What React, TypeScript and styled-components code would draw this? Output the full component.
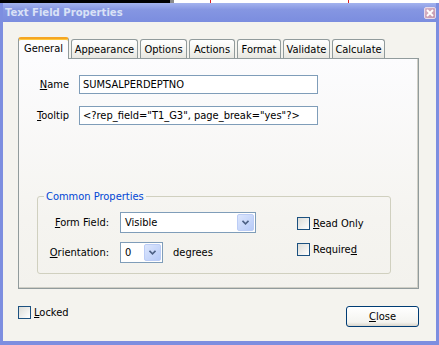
import styled, { createGlobalStyle } from 'styled-components';

const GlobalStyle = createGlobalStyle`
  html, body {
    margin: 0;
    padding: 0;
  }
  body {
    font-family: "DejaVu Sans Condensed", "DejaVu Sans", sans-serif;
    font-size: 11px;
    color: #000;
  }
`;

const Page = styled.div`
  width: 439px;
  height: 345px;
  display: flex;
  flex-direction: column;
  overflow: hidden;
`;

const TopStrip = styled.div`
  display: flex;
  height: 3px;
`;

const StripSeg = styled.div<{ $w?: number; $c: string }>`
  background: ${(p) => p.$c};
  ${(p) => (p.$w ? `width: ${p.$w}px;` : 'flex: 1;')}
`;

const Frame = styled.div`
  flex: 1;
  display: flex;
  flex-direction: column;
  background: #7d8ee0;
  padding: 0 3px 4px 3px;
`;

const TitleBar = styled.div`
  height: 19px;
  display: flex;
  align-items: center;
  justify-content: space-between;
  padding: 0 0 0 2px;
  background: linear-gradient(#a3b3ee 0%, #8596e2 35%, #7b8ddf 100%);
`;

const TitleText = styled.span`
  font-family: "DejaVu Sans Condensed", "DejaVu Sans", sans-serif;
  font-weight: bold;
  font-size: 11.2px;
  color: #d9e1f6;
`;

const CloseBox = styled.div`
  width: 12px;
  height: 12px;
  box-sizing: border-box;
  border: 1px solid #e6dcec;
  border-radius: 2px;
  background: linear-gradient(135deg, #d8b4c6, #c497ad);
  display: flex;
  align-items: center;
  justify-content: center;
`;

const Client = styled.div`
  flex: 1;
  display: flex;
  flex-direction: column;
  background: #f4f3ee;
  padding: 15px 17px 0 15px;
`;

const TabRow = styled.div`
  display: flex;
  align-items: flex-end;
  gap: 2px;
  height: 21px;
  position: relative;
  z-index: 1;
`;

const Tab = styled.div<{ $w: number; $active?: boolean }>`
  width: ${(p) => p.$w}px;
  box-sizing: border-box;
  display: flex;
  align-items: center;
  justify-content: center;
  border: 1px solid #919b9c;
  border-bottom: none;
  border-radius: 3px 3px 0 0;
  ${(p) =>
    p.$active
      ? `
    height: 22px;
    margin-bottom: -1px;
    border-top: 2px solid #f5a623;
    box-shadow: inset 0 1px 0 #ffc83c;
    background: #fcfcfe;
    padding-bottom: 2px;
  `
      : `
    height: 19px;
    background: linear-gradient(#ffffff, #f3f3ef 60%, #e7e6e0);
  `}
`;

const Panel = styled.div`
  height: 231px;
  box-sizing: border-box;
  border: 1px solid #919b9c;
  box-shadow: inset -1px -1px 0 #d0cfc6;
  background: linear-gradient(#fcfcfe, #f5f4f0 70%, #f3f2ed);
  padding: 16px 0 0 0;
  display: flex;
  flex-direction: column;
`;

const FieldGrid = styled.div`
  display: grid;
  grid-template-columns: 50px 239px;
  column-gap: 10px;
  row-gap: 12px;
  align-items: center;
`;

const FieldLabel = styled.span`
  text-align: right;
`;

const Key = styled.span`
  text-decoration: underline;
`;

const TextBox = styled.input`
  box-sizing: border-box;
  height: 19px;
  border: 1px solid #7f9db9;
  background: #fff;
  padding: 0 3px;
  font-family: inherit;
  font-size: 11px;
  color: #000;
  outline: none;
  margin: 0;
`;

const GroupBox = styled.fieldset`
  margin: 65px 0 0 18px;
  width: 354px;
  height: 84px;
  box-sizing: border-box;
  border: 1px solid #d0d0bf;
  border-radius: 3px;
  padding: 9px 0 0 0;
  min-width: 0;
  display: flex;
`;

const Legend = styled.legend`
  color: #0046d5;
  padding: 0 2px;
  margin-left: 6px;
`;

const GroupInner = styled.div`
  display: flex;
  align-items: flex-start;
`;

const OptionGrid = styled.div`
  display: grid;
  grid-template-columns: 71px auto;
  column-gap: 11px;
  row-gap: 9px;
  align-items: center;
`;

const InlineRow = styled.div`
  display: flex;
  align-items: center;
  gap: 10px;
`;

const Select = styled.div<{ $w: number }>`
  width: ${(p) => p.$w}px;
  height: 21px;
  box-sizing: border-box;
  border: 1px solid #7f9db9;
  background: #fff;
  display: flex;
  align-items: center;
  justify-content: space-between;
  padding: 1px 1px 1px 4px;
`;

const DropButton = styled.div`
  width: 17px;
  height: 100%;
  box-sizing: border-box;
  border: 1px solid #bccdf6;
  border-radius: 2px;
  background: linear-gradient(135deg, #dce6fd, #b7cbf8);
  display: flex;
  align-items: center;
  justify-content: center;
`;

const CheckColumn = styled.div`
  display: flex;
  flex-direction: column;
  gap: 13px;
  margin-left: 41px;
  padding-top: 5px;
`;

const CheckRow = styled.label`
  display: flex;
  align-items: center;
  gap: 3px;
  height: 13px;
`;

const CheckBox = styled.span`
  width: 13px;
  height: 13px;
  box-sizing: border-box;
  border: 1px solid #1c5180;
  background: linear-gradient(135deg, #dcdcd7, #ffffff);
  flex-shrink: 0;
`;

const Footer = styled.div`
  display: flex;
  justify-content: space-between;
  align-items: flex-start;
  margin-top: 17px;
`;

const PushButton = styled.button`
  width: 73px;
  height: 21px;
  box-sizing: border-box;
  border: 1px solid #003c74;
  border-radius: 3px;
  background: linear-gradient(#ffffff, #f4f4f0 80%, #d9d5cb);
  font-family: inherit;
  font-size: 11px;
  color: #000;
  padding: 0;
  margin: 0;
`;

const Chevron = () => (
  <svg width="7" height="5" viewBox="0 0 7 5">
    <path d="M0.5 0.8 L3.5 3.8 L6.5 0.8" fill="none" stroke="#4d6185" strokeWidth="1.6" />
  </svg>
);

const tabs = [
  { label: 'General', w: 51, active: true },
  { label: 'Appearance', w: 67 },
  { label: 'Options', w: 47 },
  { label: 'Actions', w: 46 },
  { label: 'Format', w: 44 },
  { label: 'Validate', w: 47 },
  { label: 'Calculate', w: 53 },
];

export default function App() {
  return (
    <Page>
      <GlobalStyle />
      <TopStrip>
        <StripSeg $w={170} $c="#000" />
        <StripSeg $w={4} $c="#8a8a8a" />
        <StripSeg $w={36} $c="#fff" />
        <StripSeg $w={1} $c="#e02020" />
        <StripSeg $w={137} $c="#fff" />
        <StripSeg $w={1} $c="#e02020" />
        <StripSeg $c="#fff" />
      </TopStrip>
      <Frame>
        <TitleBar>
          <TitleText>Text Field Properties</TitleText>
          <CloseBox>
            <svg width="8" height="8" viewBox="0 0 8 8">
              <path d="M1 1 L7 7 M7 1 L1 7" stroke="#fff" strokeWidth="1.8" />
            </svg>
          </CloseBox>
        </TitleBar>
        <Client>
          <TabRow>
            {tabs.map((t) => (
              <Tab key={t.label} $w={t.w} $active={t.active}>
                {t.label}
              </Tab>
            ))}
          </TabRow>
          <Panel>
            <FieldGrid>
              <FieldLabel>
                <Key>N</Key>ame
              </FieldLabel>
              <TextBox readOnly defaultValue="SUMSALPERDEPTNO" />
              <FieldLabel>
                <Key>T</Key>ooltip
              </FieldLabel>
              <TextBox readOnly defaultValue={'<?rep_field="T1_G3", page_break="yes"?>'} />
            </FieldGrid>
            <GroupBox>
              <Legend>Common Properties</Legend>
              <GroupInner>
                <OptionGrid>
                  <FieldLabel>
                    <Key>F</Key>orm Field:
                  </FieldLabel>
                  <Select $w={136}>
                    Visible
                    <DropButton>
                      <Chevron />
                    </DropButton>
                  </Select>
                  <FieldLabel>
                    <Key>O</Key>rientation:
                  </FieldLabel>
                  <InlineRow>
                    <Select $w={43}>
                      0
                      <DropButton>
                        <Chevron />
                      </DropButton>
                    </Select>
                    degrees
                  </InlineRow>
                </OptionGrid>
                <CheckColumn>
                  <CheckRow>
                    <CheckBox />
                    <span>
                      <Key>R</Key>ead Only
                    </span>
                  </CheckRow>
                  <CheckRow>
                    <CheckBox />
                    <span>
                      Require<Key>d</Key>
                    </span>
                  </CheckRow>
                </CheckColumn>
              </GroupInner>
            </GroupBox>
          </Panel>
          <Footer>
            <CheckRow>
              <CheckBox />
              <span>
                <Key>L</Key>ocked
              </span>
            </CheckRow>
            <PushButton>
              <Key>C</Key>lose
            </PushButton>
          </Footer>
        </Client>
      </Frame>
    </Page>
  );
}
